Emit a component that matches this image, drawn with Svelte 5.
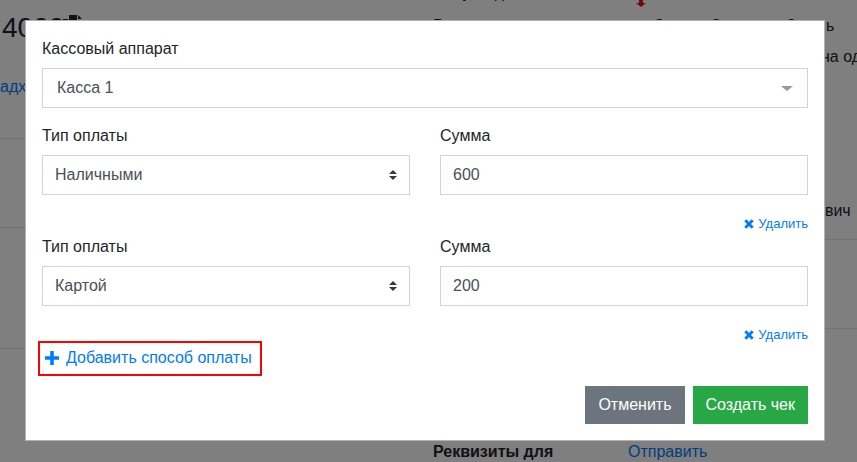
<script lang="ts">
	type Payment = { method: string; amount: string };

	const methods = ['Наличными', 'Картой'];
	let payments: Payment[] = $state([
		{ method: 'Наличными', amount: '600' },
		{ method: 'Картой', amount: '200' },
	]);
</script>

<div class="page">
	<div class="col-left">
		<div class="block first">
			<div class="total">
				4000
				<svg class="doc" viewBox="0 0 20 22" width="20" height="22">
					<path d="M0 6h5v14H0zM6 2h8v5h5v13H6z" fill="#212529" />
					<path d="M15 2l4 4h-4z" fill="#212529" />
				</svg>
			</div>
			<a class="link incoming" href="#top">адходы</a>
		</div>
		<div class="block second"></div>
		<div class="block third"></div>
	</div>

	<div class="col-mid">
		<div class="cut-top">Кому выдан</div>
		<div class="head">
			<span>Реквизиты</span>
			<span>Сумма</span>
			<span>Сдача</span>
			<span>Статус</span>
		</div>
		<svg class="arrow" viewBox="0 0 10 7" width="10" height="7">
			<path d="M3 0h4v3h3L5 7 0 3h3z" fill="#dc1414" />
		</svg>
		<div class="foot">
			<b>Реквизиты для</b>
			<a class="link" href="#top">Отправить</a>
		</div>
	</div>

	<div class="col-right">
		<div class="block right-first">
			<div class="soft">ь</div>
			<div class="sign">на одну</div>
			<div class="name">ович</div>
		</div>
		<div class="block right-second"></div>
	</div>
</div>

<div class="backdrop"></div>

<div class="modal">
	<div class="group">
		<span class="label">Кассовый аппарат</span>
		<div class="field chosen">
			<span>Касса 1</span>
			<i class="caret"></i>
		</div>
	</div>

	{#each payments as p}
		<div class="pay">
			<div>
				<span class="label">Тип оплаты</span>
				<div class="select-wrap">
					<select class="field" bind:value={p.method}>
						{#each methods as m}
							<option value={m}>{m}</option>
						{/each}
					</select>
					<svg class="updown" viewBox="0 0 4 5" width="8" height="10">
						<path d="M2 0L0 2h4zm0 5L0 3h4z" fill="#343a40" />
					</svg>
				</div>
			</div>
			<div>
				<span class="label">Сумма</span>
				<input class="field" bind:value={p.amount} />
			</div>
		</div>
		<div class="remove">
			<a href="#top">
				<svg viewBox="0 0 10 10" width="10" height="10">
					<path d="M1.3 1.3l7.4 7.4M8.7 1.3l-7.4 7.4" stroke="#007bff" stroke-width="2.9" fill="none" />
				</svg>
				Удалить
			</a>
		</div>
	{/each}

	<a class="add" href="#top">
		<svg viewBox="0 0 14 14" width="14" height="14">
			<path d="M7 0v14M0 7h14" stroke="#007bff" stroke-width="3.6" fill="none" />
		</svg>
		Добавить способ оплаты
	</a>

	<div class="actions">
		<button class="btn cancel">Отменить</button>
		<button class="btn create">Создать чек</button>
	</div>
</div>

<style>
	:global(body) {
		margin: 0;
		background: #fff;
		font-family: 'Liberation Sans', Arial, sans-serif;
		font-size: 16px;
		line-height: 24px;
		color: #212529;
	}

	.page {
		display: flex;
		height: 462px;
		overflow: hidden;
	}

	.link {
		color: #007bff;
		text-decoration: none;
	}

	.block {
		box-sizing: border-box;
		border-bottom: 1px solid #dee2e6;
	}

	.col-left {
		width: 433px;
		flex-shrink: 0;
	}

	.first {
		height: 139px;
		padding: 5px 0 0 2px;
	}

	.second {
		height: 89px;
	}

	.third {
		height: 121px;
	}

	.total {
		display: flex;
		align-items: center;
		font-size: 28px;
		line-height: 34px;
		margin-top: 6px;
	}

	.doc {
		margin: -8px 0 0 -1px;
	}

	.incoming {
		display: block;
		margin: 30px 0 0 -2px;
	}

	.col-mid {
		width: 382px;
		flex-shrink: 0;
		position: relative;
		overflow: hidden;
	}

	.cut-top {
		margin-top: -19px;
	}

	.head {
		display: grid;
		grid-template-columns: 220px 57px 75px 1fr;
		margin-top: 9px;
		white-space: nowrap;
	}

	.arrow {
		position: absolute;
		left: 203px;
		top: 0;
	}

	.foot {
		display: flex;
		margin-top: 402px;
		white-space: nowrap;
	}

	.foot b {
		width: 195px;
	}

	.col-right {
		flex: 1;
		min-width: 0;
		overflow: hidden;
		white-space: nowrap;
	}

	.right-first {
		height: 240px;
		padding-top: 14px;
	}

	.right-second {
		height: 89px;
	}

	.soft {
		padding-left: 11px;
	}

	.sign {
		margin-top: 7px;
		padding-left: 6px;
	}

	.name {
		margin-top: 130px;
		padding-left: 1px;
	}

	.backdrop {
		position: fixed;
		inset: 0;
		background: rgba(0, 0, 0, 0.5);
	}

	.modal {
		position: fixed;
		left: 25px;
		top: 20px;
		box-sizing: border-box;
		width: 800px;
		height: 421px;
		padding: 16px;
		background: #fff;
		border: 1px solid rgba(0, 0, 0, 0.3);
	}

	.label {
		display: block;
		height: 24px;
		margin-bottom: 7px;
	}

	.group {
		margin-bottom: 16px;
	}

	.field {
		display: block;
		box-sizing: border-box;
		width: 100%;
		height: 40px;
		padding: 0 12px;
		border: 1px solid #ced4da;
		border-radius: 0;
		background: #fff;
		font: inherit;
		color: #495057;
		outline: none;
		appearance: none;
	}

	.chosen {
		display: flex;
		align-items: center;
		justify-content: space-between;
		padding: 0 14px;
	}

	.caret {
		width: 0;
		height: 0;
		border-left: 6px solid transparent;
		border-right: 6px solid transparent;
		border-top: 5px solid #999;
		margin-top: 1px;
	}

	.pay {
		display: grid;
		grid-template-columns: 368px 368px;
		column-gap: 30px;
	}

	.select-wrap {
		position: relative;
	}

	.updown {
		position: absolute;
		right: 13px;
		top: 15px;
		pointer-events: none;
	}

	.remove {
		display: flex;
		justify-content: flex-end;
		height: 20px;
		margin: 19px 0 1px;
		font-size: 13px;
		line-height: 20px;
	}

	.remove a {
		display: flex;
		align-items: center;
		gap: 4px;
		color: #007bff;
		text-decoration: none;
	}

	.add {
		display: flex;
		align-items: center;
		gap: 7px;
		box-sizing: border-box;
		width: 224px;
		height: 35px;
		margin: -5px 0 10px -4px;
		padding: 0 0 2px 5px;
		border: 2px solid #f00;
		color: #007bff;
		text-decoration: none;
	}

	.actions {
		display: flex;
		justify-content: flex-end;
		gap: 8px;
	}

	.btn {
		height: 38px;
		padding: 0 12px;
		border: 1px solid;
		border-radius: 0;
		font: inherit;
		color: #fff;
	}

	.cancel {
		background: #6c757d;
		border-color: #6c757d;
	}

	.create {
		background: #28a745;
		border-color: #28a745;
	}
</style>
